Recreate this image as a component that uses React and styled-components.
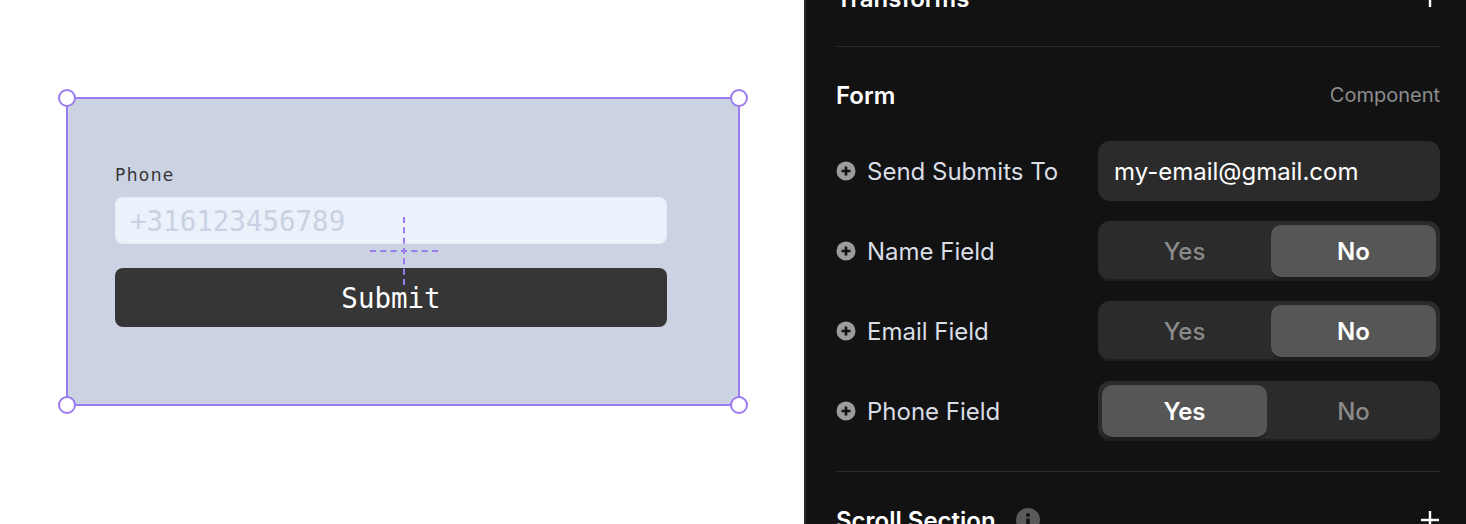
import React from 'react';
import styled, { createGlobalStyle } from 'styled-components';

const Global = createGlobalStyle`
  html, body {
    margin: 0;
    padding: 0;
    background: #ffffff;
    overflow: hidden;
  }
`

const Page = styled.div`
  display: flex;
  width: 1466px;
  height: 524px;
  overflow: hidden;
`

const Canvas = styled.div`
  width: 804px;
  flex: none;
  background: #ffffff;
  padding: 97px 0 0 66px;
  box-sizing: border-box;
`

const Frame = styled.div`
  position: relative;
  width: 674px;
  height: 309px;
  box-sizing: border-box;
  border: 2px solid #9a7bf2;
  background: #cbd3e3;
  padding: 66px 0 0 47px;
  display: flex;
  flex-direction: column;
`

const Handle = styled.span`
  position: absolute;
  width: 14px;
  height: 14px;
  border-radius: 50%;
  border: 2px solid #9a7bf2;
  background: #ffffff;
  ${p => p.top ? 'top: -10px;' : 'bottom: -10px;'}
  ${p => p.left ? 'left: -10px;' : 'right: -10px;'}
`

const Label = styled.label`
  font-family: "DejaVu Sans", sans-serif;
  font-size: 17px;
  line-height: 20px;
  letter-spacing: 1.4px;
  color: #353535;
`

const Input = styled.div`
  margin-top: 12px;
  width: 552px;
  height: 47px;
  box-sizing: border-box;
  border-radius: 8px;
  border: 1px dotted #dde4f2;
  background: #ecf2fc;
  padding-left: 14px;
  display: flex;
  align-items: center;
  font-family: "DejaVu Sans Mono", "Liberation Mono", monospace;
  font-size: 27.5px;
  color: #c9d1e2;
`

const SubmitButton = styled.div`
  margin-top: 24px;
  width: 552px;
  height: 59px;
  border-radius: 8px;
  background: #363636;
  display: flex;
  align-items: center;
  justify-content: center;
  font-family: "DejaVu Sans Mono", "Liberation Mono", monospace;
  font-size: 27.5px;
  color: #ffffff;
`

const Crosshair = styled.div`
  position: absolute;
  left: 302px;
  top: 118px;
  width: 68px;
  height: 68px;
  pointer-events: none;

  &::before, &::after {
    content: '';
    position: absolute;
  }
  &::before {
    left: 33px;
    top: 0;
    height: 68px;
    border-left: 2px dashed #9a7bf2;
  }
  &::after {
    top: 33px;
    left: 0;
    width: 68px;
    border-top: 2px dashed #9a7bf2;
  }
`

const Panel = styled.aside`
  flex: 1;
  background: #121212;
  border-left: 2px solid #2a2a2a;
  padding: 0 26px 0 30px;
  font-family: Inter, "Noto Sans", sans-serif;
  overflow: hidden;
`

const Shift = styled.div`
  margin-top: -24px;
`

const Section = styled.section`
  padding: 26px 0 30px;
  border-bottom: 1px solid #2a2a2a;
  display: flex;
  flex-direction: column;
  &:first-child { padding: 0 0 26px; }
  &:last-child { border-bottom: none; }
`

const Header = styled.div`
  height: 44px;
  display: flex;
  align-items: center;
  justify-content: space-between;
`

const Title = styled.h3`
  margin: 0;
  font-size: 24px;
  font-weight: 600;
  color: #ffffff;
  display: flex;
  align-items: center;
  gap: 20px;
`

const Meta = styled.span`
  font-size: 20px;
  color: #8c8c8c;
`

const Rows = styled.div`
  margin-top: 24px;
  display: flex;
  flex-direction: column;
  gap: 20px;
`

const Row = styled.div`
  display: flex;
  align-items: center;
  justify-content: space-between;
  height: 60px;
`

const RowLabel = styled.div`
  display: flex;
  align-items: center;
  gap: 11px;
  font-size: 24px;
  color: #d9dde6;
`

const TextBox = styled.div`
  width: 342px;
  height: 60px;
  box-sizing: border-box;
  border-radius: 12px;
  background: #2b2b2b;
  display: flex;
  align-items: center;
  padding-left: 16px;
  font-size: 24px;
  color: #ffffff;
`

const Segmented = styled.div`
  width: 342px;
  height: 60px;
  box-sizing: border-box;
  border-radius: 12px;
  background: #2b2b2b;
  padding: 4px;
  display: grid;
  grid-template-columns: 1fr 1fr;
  gap: 4px;
  box-shadow: inset 0 -2px 0 #1e1e1e;
`

const Segment = styled.div`
  border-radius: 10px;
  display: flex;
  align-items: center;
  justify-content: center;
  font-size: 24px;
  font-weight: ${p => p.active ? 600 : 500};
  color: ${p => p.active ? '#ffffff' : '#8a8a8a'};
  background: ${p => p.active ? '#565656' : 'transparent'};
  box-shadow: ${p => p.active ? '0 2px 0 #1f1f1f' : 'none'};
`

const PlusCircle = () => (
  <svg width="20" height="20" viewBox="0 0 20 20">
    <circle cx="10" cy="10" r="9.5" fill="#9c9c9c" />
    <path d="M10 5.5v9M5.5 10h9" stroke="#121212" strokeWidth="2.6" />
  </svg>
)

const Plus = () => (
  <svg width="20" height="20" viewBox="0 0 20 20">
    <path d="M10 1v18M1 10h18" stroke="#ffffff" strokeWidth="2.4" />
  </svg>
)

const Info = () => (
  <svg width="24" height="24" viewBox="0 0 24 24">
    <circle cx="12" cy="12" r="12" fill="#5a5a5a" />
    <circle cx="12" cy="7" r="2" fill="#121212" />
    <rect x="10.2" y="10.5" width="3.6" height="8" fill="#121212" />
  </svg>
)

const toggles = [
  { label: 'Name Field', value: false },
  { label: 'Email Field', value: false },
  { label: 'Phone Field', value: true },
]

const App = () => {
  return (
    <Page>
      <Global />
      <Canvas>
        <Frame>
          <Handle top left />
          <Handle top />
          <Handle left />
          <Handle />
          <Label>Phone</Label>
          <Input>+316123456789</Input>
          <SubmitButton>Submit</SubmitButton>
          <Crosshair />
        </Frame>
      </Canvas>
      <Panel>
        <Shift>
          <Section>
            <Header>
              <Title>Transforms</Title>
              <Plus />
            </Header>
          </Section>
          <Section>
            <Header>
              <Title>Form</Title>
              <Meta>Component</Meta>
            </Header>
            <Rows>
              <Row>
                <RowLabel><PlusCircle />Send Submits To</RowLabel>
                <TextBox>my-email@gmail.com</TextBox>
              </Row>
              {toggles.map(t => (
                <Row key={t.label}>
                  <RowLabel><PlusCircle />{t.label}</RowLabel>
                  <Segmented>
                    <Segment active={t.value}>Yes</Segment>
                    <Segment active={!t.value}>No</Segment>
                  </Segmented>
                </Row>
              ))}
            </Rows>
          </Section>
          <Section>
            <Header>
              <Title>Scroll Section <Info /></Title>
              <Plus />
            </Header>
          </Section>
        </Shift>
      </Panel>
    </Page>
  );
}

export default App;
